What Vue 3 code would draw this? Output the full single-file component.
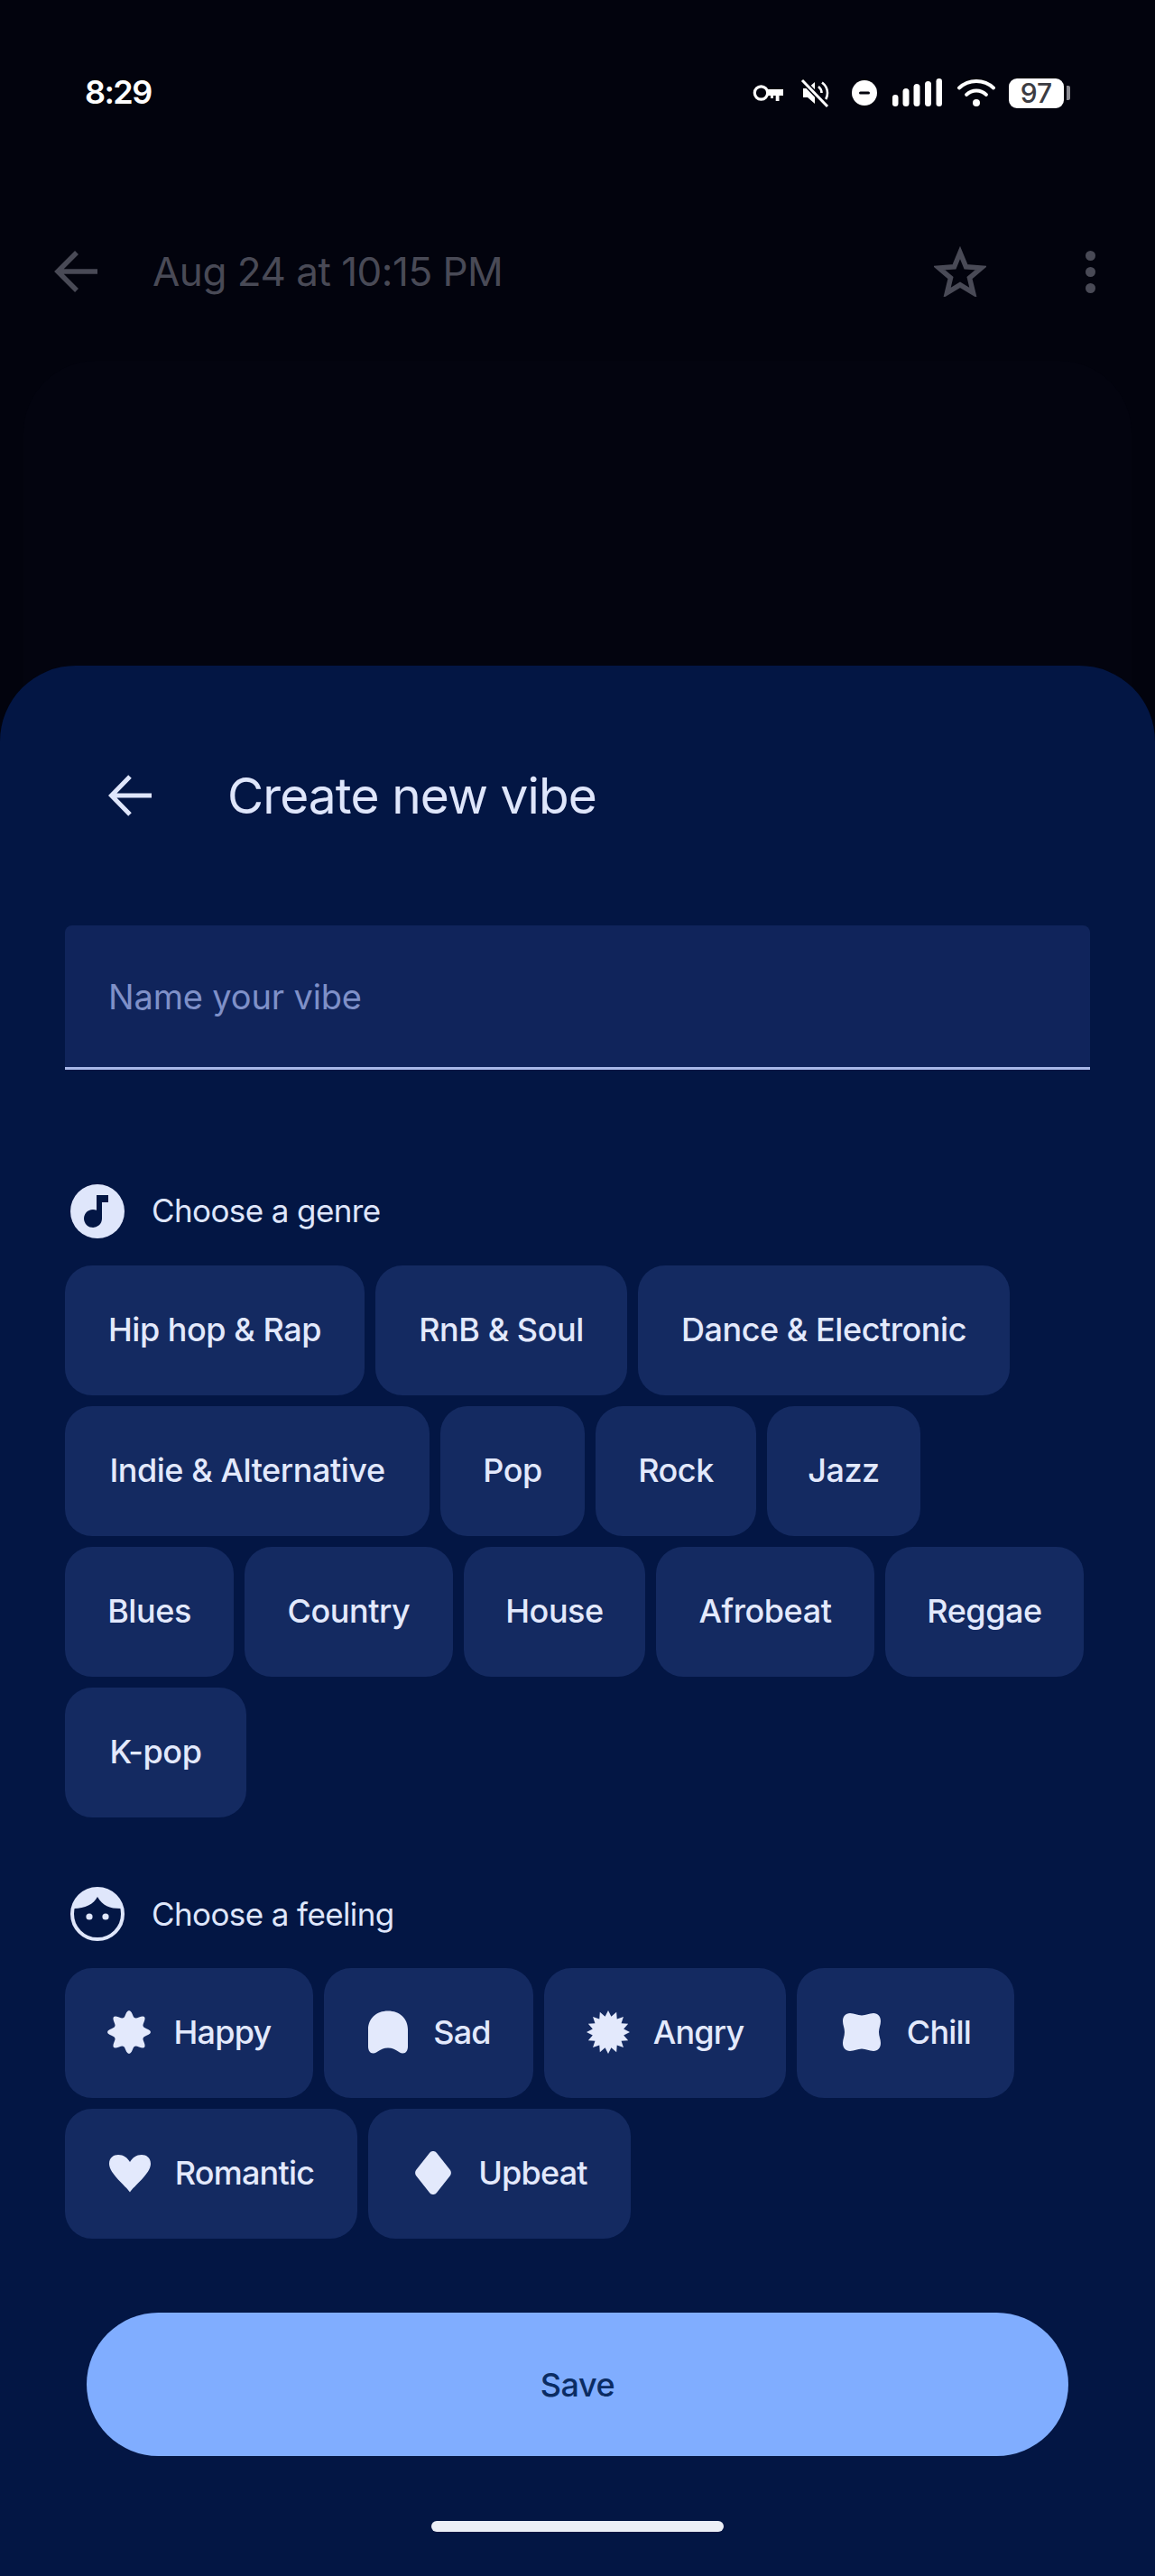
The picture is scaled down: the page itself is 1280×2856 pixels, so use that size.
<template>
  <div class="screen">
    <div class="backdrop">
      <div class="status-bar">
        <span class="clock">8:29</span>
        <div class="status-icons">
          <svg class="ic-key" width="34" height="20" viewBox="0 0 34 20" fill="none">
            <circle cx="9.500" cy="10" r="7.200" stroke="#fff" stroke-width="3.200" />
            <path d="M17 6h17v7h-4.500v6h-3.800v-6h-2.700v3H20v-3h-3z" fill="#fff" />
          </svg>
          <svg class="ic-mute" width="32" height="32" viewBox="0 0 32 32" fill="none">
            <path d="M3 11h5l8-7v24l-8-7H3z" fill="#fff" />
            <path d="M20 9c2.500 2 3.500 4.500 3.500 7M24 4.500c4 3 6 7 6 11.500 0 2.500-.6 5-1.800 7" stroke="#fff" stroke-width="2.600" />
            <path d="M2 2l28 29" stroke="#02030d" stroke-width="6" />
            <path d="M2 2l28 29" stroke="#fff" stroke-width="3" />
          </svg>
          <svg class="ic-dnd" width="28" height="28" viewBox="0 0 28 28">
            <circle cx="14" cy="14" r="14" fill="#fff" />
            <rect x="8" y="12.500" width="12" height="3" rx="1.500" fill="#02030d" />
          </svg>
          <svg class="ic-signal" width="56" height="32" viewBox="0 0 56 32" fill="#fff">
            <rect x="0" y="18" width="6.500" height="13" rx="3.200" />
            <rect x="11.500" y="11" width="7" height="20" rx="3.500" />
            <rect x="23.500" y="6" width="7" height="25" rx="3.500" />
            <rect x="36" y="3" width="7" height="28" rx="3.500" />
            <rect x="48.500" y="0" width="6.500" height="31" rx="3.200" />
          </svg>
          <svg class="ic-wifi" width="42" height="32" viewBox="0 0 42 32" fill="none" stroke="#fff" stroke-linecap="round">
            <path d="M2 10.500C12.500 .5 29.500 .5 40 10.500" stroke-width="3.800" />
            <path d="M10 18c6.500-6 15.500-6 22 0" stroke-width="3.800" />
            <circle cx="21" cy="27" r="4" fill="#fff" stroke="none" />
          </svg>
          <div class="battery">
            <span class="battery-body">97</span>
            <span class="battery-tip"></span>
          </div>
        </div>
      </div>

      <div class="top-bar">
        <svg width="48" height="46" viewBox="0 0 48 46" fill="none" stroke="#494a56" stroke-width="5.500">
          <path d="M48 23H4M25 2L4 23l21 21" />
        </svg>
        <span class="top-title">Aug 24 at 10:15 PM</span>
        <svg class="top-star" width="58" height="56" viewBox="0 0 58 56" fill="none" stroke="#494a56" stroke-width="5.500">
          <path d="M29 7l6.500 15.800 17 1.300-13 11 4 16.500L29 42.800 14.500 51.600l4-16.500-13-11 17-1.300z" />
        </svg>
        <div class="top-dots"><i></i><i></i><i></i></div>
      </div>

      <div class="bg-card"></div>
    </div>

    <section class="sheet">
      <header class="sheet-head">
        <svg width="48" height="48" viewBox="0 0 48 48" fill="none" stroke="#dfe6fb" stroke-width="5">
          <path d="M48 24H4M24 3L3.500 24 24 45" />
        </svg>
        <h1>Create new vibe</h1>
      </header>

      <div class="name-field">Name your vibe</div>

      <div class="section-label genre">
        <svg width="60" height="60" viewBox="0 0 60 60">
          <circle cx="30" cy="30" r="30" fill="#dfe6fb" />
          <path d="M29 12h13v8h-7v18a10 10 0 1 1-6-9.200z" fill="#031644" />
        </svg>
        <span>Choose a genre</span>
      </div>
      <div class="chips">
        <div v-for="g in genres" :key="g.label" class="chip" :style="{ width: g.w + 'px' }">{{ g.label }}</div>
      </div>

      <div class="section-label feeling">
        <svg width="60" height="60" viewBox="0 0 60 60">
          <circle cx="30" cy="30" r="28" fill="#031644" stroke="#dfe6fb" stroke-width="4" />
          <path d="M4 24C6 10 17 2 30 2s24 8 26 22c-13 0-20-3-26-13-4 8-14 13-26 13z" fill="#dfe6fb" />
          <circle cx="21" cy="33" r="3.600" fill="#dfe6fb" />
          <circle cx="39" cy="33" r="3.600" fill="#dfe6fb" />
        </svg>
        <span>Choose a feeling</span>
      </div>
      <div class="chips">
        <div v-for="f in feelings" :key="f.label" class="chip with-icon" :style="{ width: f.w + 'px' }">
          <svg width="48" height="48" viewBox="0 0 48 48">
            <path :d="f.shape" fill="#e3e9fc" />
          </svg>
          {{ f.label }}
        </div>
      </div>

      <button class="save">Save</button>
      <div class="home-bar"></div>
    </section>
  </div>
</template>

<script setup>
// radial shape, used for the flower and burst icons
function radial(count, outer, inner, sharp) {
  const pts = [];
  const steps = sharp ? count * 2 : count * 12;
  for (let i = 0; i < steps; i++) {
    const a = (i / steps) * Math.PI * 2 - Math.PI / 2;
    const r = sharp
      ? (i % 2 === 0 ? outer : inner)
      : inner + (outer - inner) * Math.pow((Math.cos(count * (a + Math.PI / 2)) + 1) / 2, 1.3);
    pts.push((24 + r * Math.cos(a)).toFixed(2) + ' ' + (24 + r * Math.sin(a)).toFixed(2));
  }
  return 'M' + pts.join('L') + 'Z';
}

const genres = [
  { label: 'Hip hop & Rap', w: 332 },
  { label: 'RnB & Soul', w: 279 },
  { label: 'Dance & Electronic', w: 412 },
  { label: 'Indie & Alternative', w: 404 },
  { label: 'Pop', w: 160 },
  { label: 'Rock', w: 178 },
  { label: 'Jazz', w: 170 },
  { label: 'Blues', w: 187 },
  { label: 'Country', w: 231 },
  { label: 'House', w: 201 },
  { label: 'Afrobeat', w: 242 },
  { label: 'Reggae', w: 220 },
  { label: 'K-pop', w: 201 }
];

const feelings = [
  { label: 'Happy', w: 275, shape: radial(8, 24, 17, false) },
  { label: 'Sad', w: 232, shape: 'M24 .5C37 .5 46 9 46 21v19c0 4-2 7.500-5.500 7.500-5.500 0-7-6-16.500-6s-11 6-16.500 6C4 47.500 2 44 2 40V21C2 9 11 .5 24 .5z' },
  { label: 'Angry', w: 268, shape: radial(16, 24, 17.5, true) },
  { label: 'Chill', w: 241, shape: 'M11 3c5 0 8 2.500 13 2.500S32 3 37 3c5 0 8 3.500 8 9 0 4.500-2 7-2 12s2 7.500 2 12c0 5.500-3 9-8 9-5 0-8-2.500-13-2.500S16 45 11 45c-5 0-8-3.500-8-9 0-4.500 2-7 2-12s-2-7.500-2-12c0-5.500 3-9 8-9z' },
  { label: 'Romantic', w: 324, shape: 'M24 45.500C20 39 1 25 1 14 1 7 6 4 11 4c6 0 10 3 13 8 3-5 7-8 13-8 5 0 10 3 10 10 0 11-19 25-23 31.500z' },
  { label: 'Upbeat', w: 291, shape: 'M20 2c2-2.700 6-2.700 8 0l15 19c1.200 1.700 1.200 4.300 0 6L28 46c-2 2.700-6 2.700-8 0L5 27c-1.200-1.700-1.200-4.300 0-6z' }
];
</script>

<style scoped>
.screen {
  position: relative;
  width: 1280px;
  height: 2856px;
  overflow: hidden;
  font-family: Inter, "Noto Sans", sans-serif;
}

.backdrop {
  height: 100%;
  background: #02030d;
}

.status-bar {
  height: 255px;
  padding: 80px 94px 0;
  display: flex;
  justify-content: space-between;
  box-sizing: border-box;
}

.clock {
  font-size: 36px;
  font-weight: 600;
  line-height: 44px;
  letter-spacing: -1.6px;
  color: #fff;
}

.status-icons {
  display: flex;
  align-items: center;
  height: 46px;
}

.ic-mute { margin-left: 19px; }
.ic-dnd { margin-left: 25px; }
.ic-signal { margin-left: 17px; }
.ic-wifi { margin-left: 16px; }

.battery {
  margin-left: 15px;
  display: flex;
  align-items: center;
  gap: 3px;
}

.battery-body {
  width: 61px;
  height: 33px;
  border-radius: 9px;
  background: #fff;
  color: #3c3c42;
  font-size: 30px;
  font-weight: 500;
  line-height: 33px;
  text-align: center;
}

.battery-tip {
  width: 4px;
  height: 16px;
  background: #8a8a90;
  border-radius: 0 2px 2px 0;
}

.top-bar {
  display: flex;
  align-items: center;
  height: 92px;
  padding: 0 66px 0 60px;
}

.top-title {
  margin-left: 61px;
  font-size: 44px;
  letter-spacing: -0.5px;
  color: #494a56;
}

.top-star { margin-left: auto; margin-right: -5px; }

.top-dots {
  margin-left: 115px;
  display: flex;
  flex-direction: column;
  gap: 7px;
}

.top-dots i {
  display: block;
  width: 11px;
  height: 11px;
  border-radius: 50%;
  background: #494a56;
}

.bg-card {
  margin: 53px 26px 0;
  height: 2000px;
  background: #03040f;
  border-radius: 80px;
}

.sheet {
  position: absolute;
  left: 0;
  right: 0;
  top: 738px;
  bottom: 0;
  padding: 0 72px;
  background: #031644;
  border-radius: 84px 84px 0 0;
  color: #dfe6fb;
}

.sheet-head {
  display: flex;
  align-items: center;
  height: 48px;
  margin: 120px 0 0 48px;
}

.sheet-head h1 {
  margin: 0 0 0 84px;
  font-size: 55px;
  font-weight: 400;
  letter-spacing: -0.9px;
}

.name-field {
  margin-top: 120px;
  height: 160px;
  padding-left: 48px;
  box-sizing: border-box;
  display: flex;
  align-items: center;
  background: #10245b;
  border-bottom: 3px solid #a9b8e8;
  border-radius: 8px 8px 0 0;
  color: #7f90c8;
  font-size: 38px;
  letter-spacing: -0.15px;
}

.section-label {
  display: flex;
  align-items: center;
  gap: 30px;
  margin: 127px 0 30px 6px;
  height: 60px;
  font-size: 35px;
  letter-spacing: -0.6px;
}

.section-label.genre span {
  margin-top: -2px;
}

.section-label.feeling {
  margin-top: 77px;
}

.chips {
  display: flex;
  flex-wrap: wrap;
  gap: 12px;
}

.chip {
  display: flex;
  align-items: center;
  justify-content: center;
  height: 144px;
  padding-bottom: 2px;
  box-sizing: border-box;
  border-radius: 30px;
  background: #142a61;
  font-size: 36px;
  font-weight: 500;
  letter-spacing: -0.45px;
  color: #e3e9fc;
}

.chip.with-icon {
  gap: 26px;
  letter-spacing: -0.8px;
}

.save {
  display: block;
  width: 1088px;
  height: 159px;
  margin: 82px 0 0 24px;
  border: 0;
  border-radius: 80px;
  background: #80adff;
  color: #0b2c63;
  font: 500 36px Inter, sans-serif;
  letter-spacing: -0.4px;
}

.home-bar {
  width: 324px;
  height: 12px;
  margin: 72px auto 0;
  border-radius: 6px;
  background: #eceff7;
}
</style>
